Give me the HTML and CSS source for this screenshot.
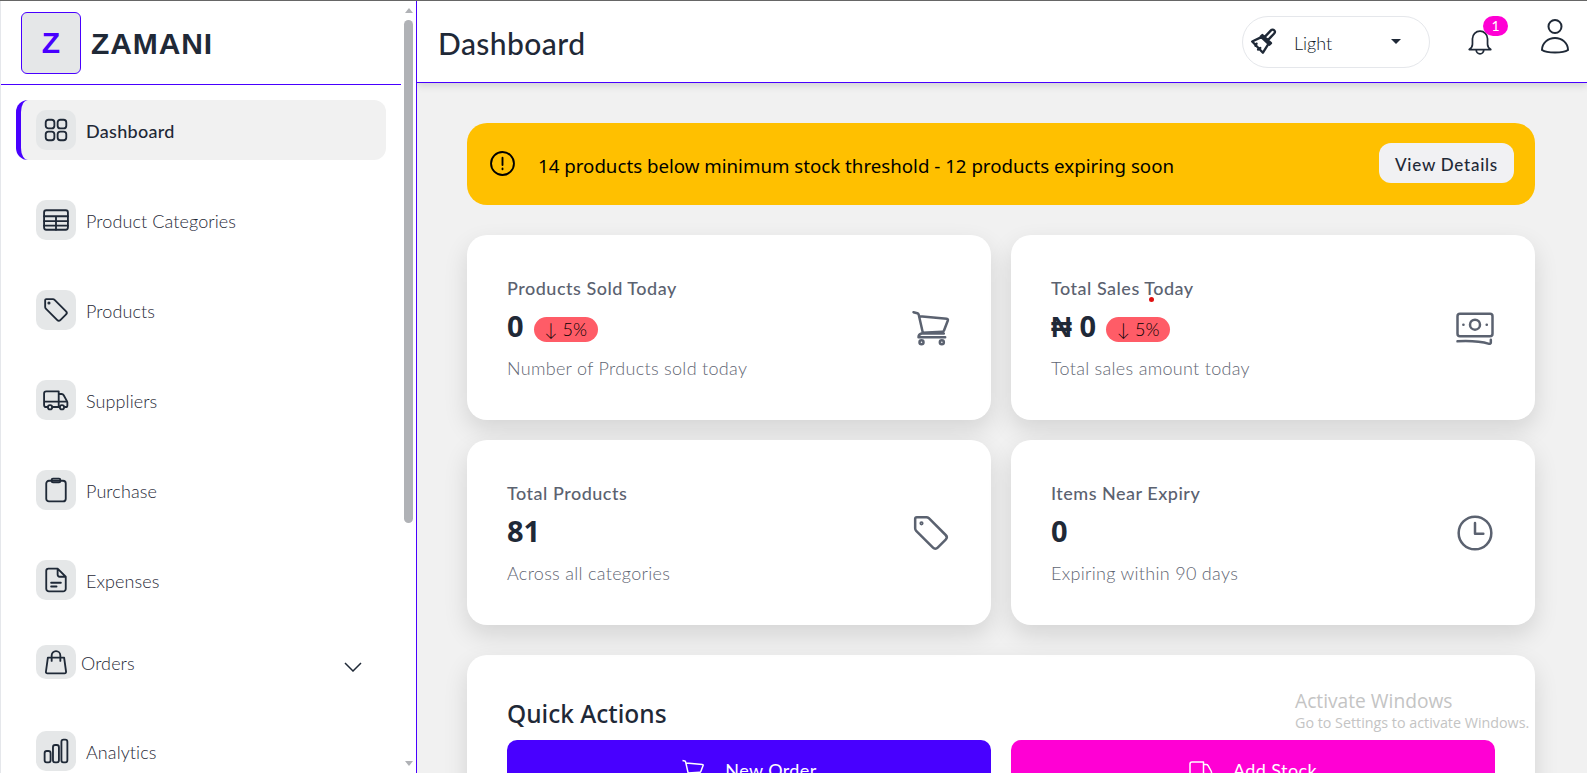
FILE: index.html
```html
<!DOCTYPE html>
<html lang="en">
<head>
  <meta charset="UTF-8" />
  <meta name="viewport" content="width=device-width, initial-scale=1.0" />
  <title>Zamani - Dashboard</title>
  <link rel="stylesheet" href="styles.css">
</head>
<body>
  <aside class="sidebar">
    <div class="sidebar-body">
      <div class="brand">
        <div class="brand-mark">Z</div>
        <span class="brand-name">ZAMANI</span>
      </div>
      <nav class="nav">
        <a class="nav-item active">
          <span class="nav-icon"><svg viewBox="0 0 24 24"><rect x="2.500" y="2.500" width="8" height="8" rx="2.500"/><rect x="13.500" y="2.500" width="8" height="8" rx="2.500"/><rect x="2.500" y="13.500" width="8" height="8" rx="2.500"/><rect x="13.500" y="13.500" width="8" height="8" rx="2.500"/></svg></span>
          <span class="nav-text">Dashboard</span>
        </a>
        <a class="nav-item">
          <span class="nav-icon"><svg viewBox="0 0 24 24"><rect x="1" y="3" width="22" height="18" rx="2"/><path d="M1 8.500h22M1 13h22M1 17.200h22M12 8.500v12.500"/></svg></span>
          <span class="nav-text">Product Categories</span>
        </a>
        <a class="nav-item">
          <span class="nav-icon"><svg viewBox="0 0 24 24"><path d="M3 2h6.200c.6 0 1.100.2 1.500.6l10.600 10.600c.8.8.8 2 0 2.800l-5.300 5.300c-.8.8-2 .8-2.800 0L2.600 10.700C2.200 10.300 2 9.800 2 9.200V3c0-.6.400-1 1-1z"/><circle cx="5.500" cy="5.500" r=".6"/></svg></span>
          <span class="nav-text">Products</span>
        </a>
        <a class="nav-item">
          <span class="nav-icon"><svg viewBox="0 0 24 24"><path d="M4.500 18.500H3a2 2 0 0 1-2-2V6a2 2 0 0 1 2-2h11.500v14.500H8.500M14.500 6.500h2.700c.8 0 1.500.4 1.900 1.100l3 5.400c.2.400.4.800.4 1.300v2.700c0 .8-.7 1.500-1.500 1.500h-1M14.500 18.500h1M1 13.500h21"/><circle cx="6.500" cy="18.700" r="2"/><circle cx="17.500" cy="18.700" r="2"/></svg></span>
          <span class="nav-text">Suppliers</span>
        </a>
        <a class="nav-item">
          <span class="nav-icon"><svg viewBox="0 0 24 24"><rect x="3" y="3.500" width="18" height="19" rx="2.500"/><rect x="8" y="1.500" width="8" height="3.500" rx="1.200"/></svg></span>
          <span class="nav-text">Purchase</span>
        </a>
        <a class="nav-item">
          <span class="nav-icon"><svg viewBox="0 0 24 24"><path d="M5 1.500h8.500L21 9v11a2.500 2.500 0 0 1-2.500 2.500h-13A2.500 2.500 0 0 1 3 20V3.500a2 2 0 0 1 2-2zM13.500 1.500V7a2 2 0 0 0 2 2H21M7.500 14.500h9M7.500 18h5"/></svg></span>
          <span class="nav-text">Expenses</span>
        </a>
        <a class="nav-item nav-item-group">
          <span class="nav-icon"><svg viewBox="0 0 24 24"><path d="M4.500 8h15l1.800 13c.1.800-.5 1.500-1.300 1.500H4c-.8 0-1.400-.7-1.300-1.500zM8 11V6a4 4 0 0 1 8 0v5"/></svg></span>
          <span class="nav-text nav-label">Orders</span>
          <svg class="nav-chevron" viewBox="0 0 18 10"><path d="M1 1l8 8 8-8"/></svg>
        </a>
        <a class="nav-item">
          <span class="nav-icon"><svg viewBox="0 0 24 24"><rect x="1.500" y="12" width="5.500" height="10.500" rx="2"/><rect x="9.200" y="6.500" width="5.500" height="16" rx="2"/><rect x="17" y="1.500" width="5.500" height="21" rx="2"/></svg></span>
          <span class="nav-text">Analytics</span>
        </a>
      </nav>
    </div>
    <div class="scrollbar">
      <span class="scroll-up"></span>
      <span class="scroll-thumb"></span>
      <span class="scroll-down"></span>
    </div>
  </aside>

  <main class="main">
    <header class="topbar">
      <h1 class="page-title">Dashboard</h1>
      <div class="theme-select">
        <svg class="theme-icon" viewBox="0 0 28 28"><path d="M17.500 12.500l6-6.500c.8-.9.800-2.200 0-3s-2.200-.7-3 .1l-6 6.400M12.500 7.500l8 7.500-1.500 1.500-8-7.500zM11.500 9.500L3 13.500l10 10.500 5-8M7 15.500l-1 2M10.500 19.500l-2 1.500"/></svg>
        <span class="theme-label">Light</span>
        <span class="theme-caret"></span>
      </div>
      <div class="bell">
        <svg viewBox="0 0 24 26"><path d="M12 3a7 7 0 0 0-7 7v5c0 2-1 3.500-3 5h20c-2-1.500-3-3-3-5v-5a7 7 0 0 0-7-7zM8.500 20.500a3.500 3.500 0 0 0 7 0"/></svg>
        <span class="bell-badge">1</span>
      </div>
      <svg class="avatar" viewBox="0 0 28 36"><circle cx="14" cy="8.500" r="6.500"/><path d="M1 32c0-7 6-12 13-12s13 5 13 12c-3 2-8 2.500-13 2.500S4 34 1 32z"/></svg>
    </header>

    <div class="content">
      <div class="alert">
        <svg class="alert-icon" viewBox="0 0 24 24"><circle cx="12" cy="12" r="11"/><path d="M12 6.500v7M12 16.800v.7"/></svg>
        <span class="alert-text">14 products below minimum stock threshold - 12 products expiring soon</span>
        <button class="alert-btn">View Details</button>
      </div>

      <section class="stats">
        <div class="stat-card">
          <div class="stat-info">
            <div class="stat-label">Products Sold Today</div>
            <div class="stat-row"><span class="stat-value">0</span><span class="pill">↓ 5%</span></div>
            <div class="stat-sub">Number of Prducts sold today</div>
          </div>
          <svg class="stat-icon" viewBox="0 0 24 24"><path d="M1.500 2.500l2.300.6c.4.100.7.400.8.800l2.600 11.400h12.500M5.200 5l16.300 1.500c.5 0 .8.500.6 1l-2.300 6c-.2.500-.6.800-1.100.8l-11.800.6M6.300 15.300c-1.100.3-1.800 1-1.800 2.200h16"/><circle cx="6.300" cy="20.500" r="1.200"/><circle cx="18.500" cy="20.500" r="1.200"/></svg>
        </div>
        <div class="stat-card">
          <div class="stat-info">
            <div class="stat-label">Total Sales Today<i class="red-dot"></i></div>
            <div class="stat-row"><span class="stat-value">₦ 0</span><span class="pill">↓ 5%</span></div>
            <div class="stat-sub">Total sales amount today</div>
          </div>
          <svg class="stat-icon" viewBox="0 0 24 24"><rect x="1.500" y="3.500" width="21" height="13.500" rx="1.500"/><circle cx="12" cy="10" r="3"/><path d="M5 10h.1M19 10h.1M1.500 20c6-.3 13-.2 19 1.500.5.100 1-.2 1-.8V19"/></svg>
        </div>
        <div class="stat-card">
          <div class="stat-info">
            <div class="stat-label">Total Products</div>
            <div class="stat-row"><span class="stat-value">81</span></div>
            <div class="stat-sub">Across all categories</div>
          </div>
          <svg class="stat-icon" viewBox="0 0 24 24"><path d="M3.500 2.500h5.700c.6 0 1.100.2 1.500.6l10.100 10.100c.8.8.8 2 0 2.800l-4.800 4.800c-.8.800-2 .8-2.800 0L3.100 10.700c-.4-.4-.6-.9-.6-1.500V3.500c0-.6.400-1 1-1z"/><circle cx="6.300" cy="6.200" r=".5"/></svg>
        </div>
        <div class="stat-card">
          <div class="stat-info">
            <div class="stat-label">Items Near Expiry</div>
            <div class="stat-row"><span class="stat-value">0</span></div>
            <div class="stat-sub">Expiring within 90 days</div>
          </div>
          <svg class="stat-icon" viewBox="0 0 24 24"><circle cx="12" cy="12" r="9.800"/><path d="M12 6v6.500h5"/></svg>
        </div>
      </section>

      <section class="actions-card">
        <h2 class="actions-title">Quick Actions</h2>
        <div class="actions-grid">
          <button class="action-btn action-order">
            <svg viewBox="0 0 24 24"><path d="M1.500 2.500l2.300.6c.4.100.7.400.8.800l2.600 11.400h12.500M5.200 5l16.300 1.500c.5 0 .8.500.6 1l-2.300 6c-.2.500-.6.800-1.100.8l-11.800.6"/></svg>
            New Order
          </button>
          <button class="action-btn action-stock">
            <svg viewBox="0 0 24 24"><path d="M4.500 18.500H3a2 2 0 0 1-2-2V6a2 2 0 0 1 2-2h11.500v14.500M14.500 6.500h2.700c.8 0 1.500.4 1.900 1.100l3 5.400c.2.400.4.800.4 1.300v4"/></svg>
            Add Stock
          </button>
        </div>
      </section>
    </div>

    <div class="watermark">
      <div class="watermark-title">Activate Windows</div>
      <div class="watermark-sub">Go to Settings to activate Windows.</div>
    </div>
  </main>
</body>
</html>
```

FILE: styles.css
```css
:root {
  --purple: #4800ff;
  --pink: #ff00d4;
  --ink: #1f2937;
  --muted: #5f6673;
  --page-bg: #f1f1f1;
  --chip-bg: #e5e7e8;
}

* {
  box-sizing: border-box;
  margin: 0;
  padding: 0;
}

body {
  font-family: 'Lato', sans-serif;
  color: var(--ink);
  background: var(--page-bg);
  display: flex;
  height: 100vh;
  overflow: hidden;
  border-top: 1px solid #666;
}

/* sidebar */
.sidebar {
  width: 417px;
  flex-shrink: 0;
  display: flex;
  background: #fff;
  border-left: 1px solid #e5e7eb;
  border-right: 1px solid var(--purple);
}

.sidebar-body {
  flex: 1;
  min-width: 0;
  overflow: hidden;
}

.brand {
  height: 84px;
  display: flex;
  align-items: center;
  gap: 10px;
  padding: 0 20px;
  border-bottom: 1px solid var(--purple);
}

.brand-mark {
  width: 60px;
  height: 62px;
  display: flex;
  align-items: center;
  justify-content: center;
  background: var(--chip-bg);
  border: 1px solid var(--purple);
  border-radius: 6px;
  color: var(--purple);
  font: 700 30px 'Liberation Sans', sans-serif;
}

.brand-name {
  font: 700 30px 'Liberation Sans', sans-serif;
  letter-spacing: 0.9px;
  padding-top: 2px;
}

.nav {
  padding: 15px 0 0 15px;
  width: 385px;
  display: flex;
  flex-direction: column;
  gap: 30px;
}

.nav-item {
  height: 60px;
  flex-shrink: 0;
  display: flex;
  align-items: center;
  gap: 10px;
  padding-left: 20px;
  font-size: 18px;
  font-weight: 300;
}

.nav-text {
  padding-top: 2px;
  letter-spacing: 0.1px;
}

.nav-item.active {
  background: #f1f1f1;
  border-left: 5px solid var(--purple);
  border-radius: 12px;
  padding-left: 15px;
  font-weight: 500;
}

.nav-item.active .nav-text {
  letter-spacing: 0.3px;
}

.nav-icon {
  width: 40px;
  height: 40px;
  flex-shrink: 0;
  display: flex;
  align-items: center;
  justify-content: center;
  background: var(--chip-bg);
  border-radius: 10px;
}

.nav-icon svg {
  width: 26px;
  height: 26px;
  fill: none;
  stroke: var(--ink);
  stroke-width: 1.7;
  stroke-linecap: round;
  stroke-linejoin: round;
}

.nav-item-group {
  height: 44px;
  margin-bottom: 7px;
  gap: 5px;
}

.nav-item-group .nav-icon {
  height: 34px;
}

.nav-label {
  flex: 1;
}

.nav-chevron {
  width: 18px;
  height: 10px;
  margin: 10px 24px 0 0;
  fill: none;
  stroke: var(--ink);
  stroke-width: 1.5;
}

.scrollbar {
  width: 15px;
  flex-shrink: 0;
  display: flex;
  flex-direction: column;
  align-items: center;
  padding-top: 7px;
}

.scroll-up,
.scroll-down {
  width: 0;
  height: 0;
  border-left: 4.5px solid transparent;
  border-right: 4.5px solid transparent;
}

.scroll-up {
  border-bottom: 5px solid #b0b2b6;
}

.scroll-down {
  border-top: 5px solid #b0b2b6;
  margin-top: 238px;
}

.scroll-thumb {
  width: 9px;
  height: 503px;
  margin-top: 7px;
  background: #b0b2b6;
  border-radius: 5px;
}

/* main area */
.main {
  flex: 1;
  min-width: 0;
  position: relative;
  overflow: hidden;
}

.topbar {
  height: 82px;
  display: flex;
  align-items: center;
  padding: 0 18px 0 21px;
  background: #fff;
  border-bottom: 1px solid var(--purple);
  box-shadow: 0 2px 8px rgba(0, 0, 0, 0.15);
  position: relative;
}

.page-title {
  flex: 1;
  padding-top: 2px;
  font-size: 30px;
  font-weight: 500;
  letter-spacing: 0.45px;
}

.theme-select {
  width: 188px;
  height: 52px;
  display: flex;
  align-items: center;
  padding: 0 28px 0 6px;
  border: 1px solid #e5e7eb;
  border-radius: 26px;
  margin-right: 37px;
}

.theme-icon {
  width: 30px;
  height: 30px;
  fill: none;
  stroke: var(--ink);
  stroke-width: 2.2;
  stroke-linejoin: round;
  stroke-linecap: round;
}

.theme-label {
  flex: 1;
  margin-left: 15px;
  padding-top: 2px;
  font-size: 18px;
  font-weight: 300;
  color: #111827;
}

.theme-caret {
  width: 0;
  height: 0;
  border-left: 5px solid transparent;
  border-right: 5px solid transparent;
  border-top: 5px solid var(--ink);
}

.bell {
  width: 26px;
  height: 28px;
  position: relative;
  margin-right: 48px;
}

.bell svg {
  width: 26px;
  height: 28px;
  fill: none;
  stroke: var(--ink);
  stroke-width: 1.6;
  stroke-linejoin: round;
}

.bell-badge {
  position: absolute;
  left: 16px;
  top: -12px;
  width: 25px;
  height: 20px;
  background: var(--pink);
  border-radius: 10px;
  color: #fff;
  font-size: 14px;
  line-height: 20px;
  text-align: center;
}

.avatar {
  width: 28px;
  height: 36px;
  margin-bottom: 11px;
  fill: none;
  stroke: var(--ink);
  stroke-width: 2;
}

.content {
  padding: 40px 52px 0 50px;
}

.alert {
  height: 82px;
  display: flex;
  align-items: center;
  padding: 0 21px 0 23px;
  background: #ffc000;
  border-radius: 20px;
  color: #000;
}

.alert-icon {
  width: 25px;
  height: 25px;
  margin-bottom: 1px;
  fill: none;
  stroke: #000;
  stroke-width: 1.8;
  stroke-linecap: round;
}

.alert-text {
  flex: 1;
  margin-left: 23px;
  padding-top: 2px;
  font-family: 'Noto Sans', sans-serif;
  font-size: 18.700px;
}

.alert-btn {
  width: 135px;
  height: 40px;
  margin-bottom: 2px;
  padding-top: 3px;
  background: #f1f1f3;
  border: none;
  border-radius: 12px;
  color: var(--ink);
  font-family: 'Lato', sans-serif;
  font-size: 17px;
  font-weight: 500;
  letter-spacing: 0.75px;
}

.stats {
  display: grid;
  grid-template-columns: 1fr 1fr;
  gap: 20px;
  margin-top: 30px;
}

.stat-card {
  height: 185px;
  display: flex;
  align-items: center;
  justify-content: space-between;
  padding: 0 40px;
  background: #fff;
  border-radius: 20px;
  box-shadow: 0 10px 24px rgba(0, 0, 0, 0.12);
}

.stat-info {
  padding-top: 4px;
}

.stat-label {
  position: relative;
  font-size: 18px;
  font-weight: 500;
  letter-spacing: 0.5px;
  color: #5b6270;
  margin-top: -3px;
}

.red-dot {
  position: absolute;
  left: 98px;
  top: 20px;
  width: 5px;
  height: 5px;
  border-radius: 50%;
  background: #e01010;
}

.stat-row {
  display: flex;
  align-items: center;
  gap: 10px;
  height: 36px;
  margin-top: 8px;
}

.stat-value {
  font-family: 'Open Sans', sans-serif;
  font-size: 29px;
  font-weight: 700;
}

.pill {
  width: 64px;
  height: 25px;
  margin-top: 9px;
  background: #ff5c67;
  border-radius: 13px;
  color: #000;
  font-size: 18px;
  font-weight: 300;
  line-height: 25px;
  text-align: center;
}

.stat-sub {
  margin-top: 14px;
  font-size: 18px;
  font-weight: 300;
  letter-spacing: 0.3px;
  color: var(--muted);
}

.stat-icon {
  width: 40px;
  height: 40px;
  fill: none;
  stroke: #5b6270;
  stroke-width: 1.5;
  stroke-linecap: round;
  stroke-linejoin: round;
}

.actions-card {
  margin-top: 30px;
  height: 300px;
  padding: 40px;
  background: #fff;
  border-radius: 20px;
  box-shadow: 0 10px 24px rgba(0, 0, 0, 0.12);
}

.actions-title {
  font-family: 'Noto Sans', sans-serif;
  font-size: 24.500px;
  font-weight: 500;
  line-height: 32px;
  margin-top: 3px;
}

.actions-grid {
  display: grid;
  grid-template-columns: 484px 484px;
  gap: 20px;
  margin-top: 10px;
}

.action-btn {
  height: 60px;
  display: flex;
  align-items: center;
  justify-content: center;
  gap: 20px;
  border: none;
  border-radius: 10px;
  color: #fff;
  font-family: 'Lato', sans-serif;
  font-size: 18px;
  letter-spacing: 0.4px;
}

.action-btn svg {
  width: 24px;
  height: 24px;
  fill: none;
  stroke: #fff;
  stroke-width: 1.5;
  stroke-linejoin: round;
}

.action-order {
  background: var(--purple);
}

.action-stock {
  background: var(--pink);
}

.watermark {
  position: absolute;
  left: 878px;
  top: 688px;
  color: #c4c4c4;
  font-family: 'Open Sans', sans-serif;
  pointer-events: none;
}

.watermark-title {
  font-size: 19.200px;
  line-height: 24px;
}

.watermark-sub {
  font-size: 14.300px;
  line-height: 20px;
}
```
